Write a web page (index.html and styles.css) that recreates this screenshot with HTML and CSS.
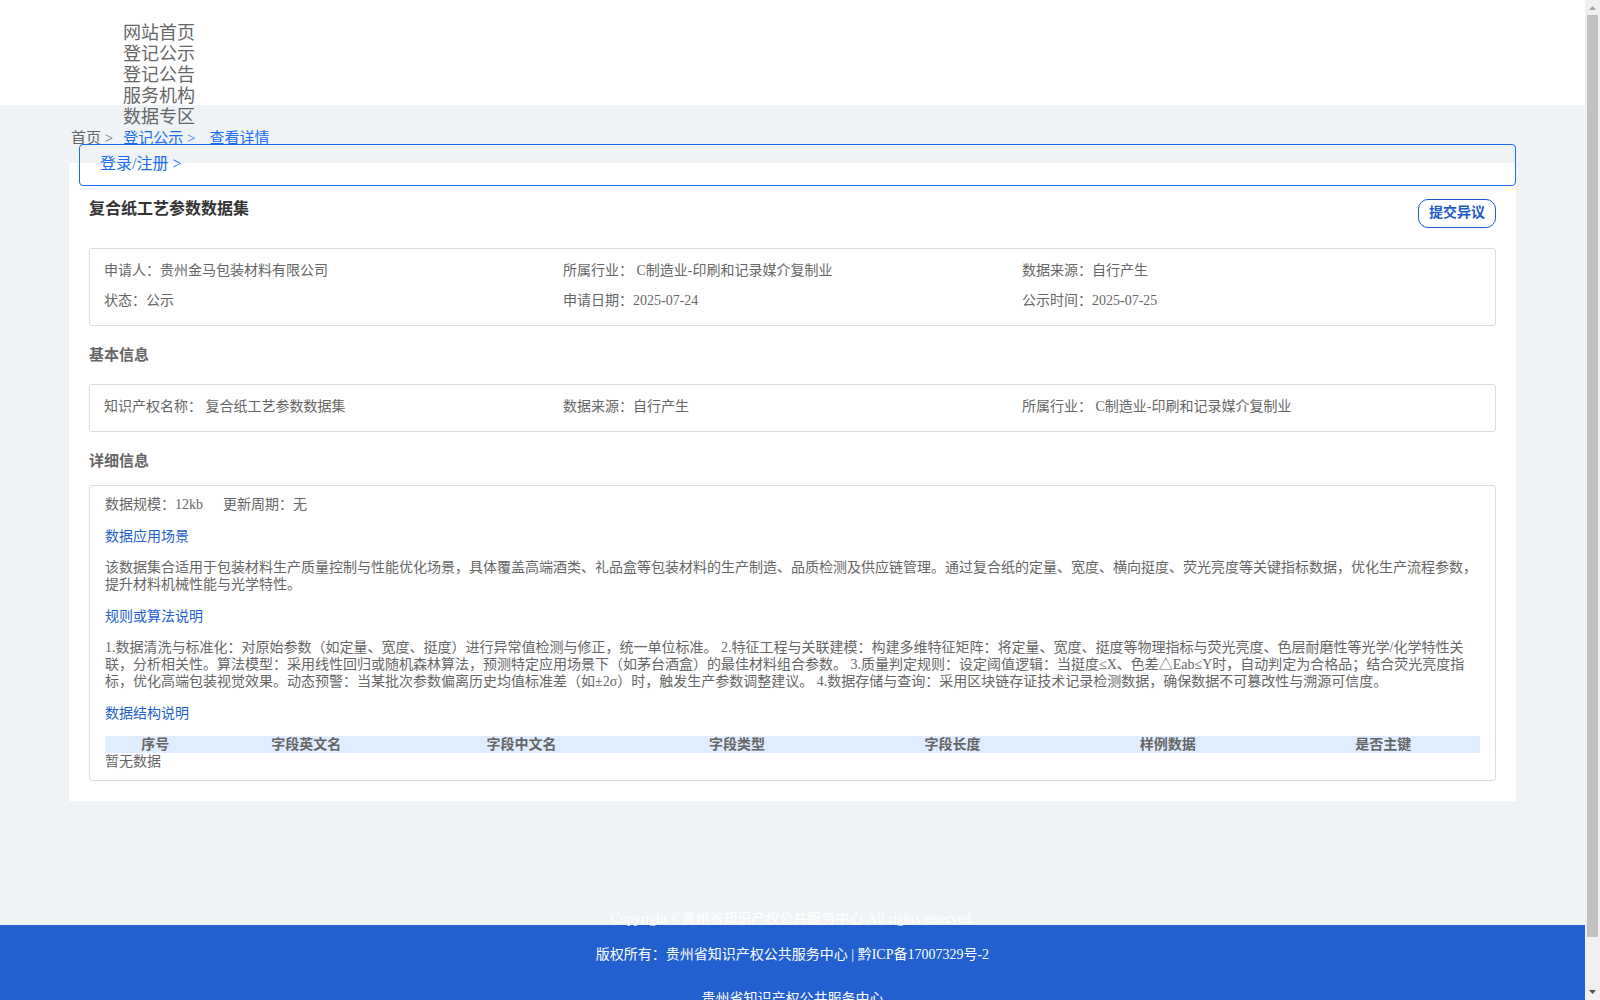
FILE: index.html
```
<!DOCTYPE html>
<html lang="zh-CN">
<head>
    <meta charset="UTF-8">
    <title>复合纸工艺参数数据集</title>
    <link rel="stylesheet" href="styles.css">
</head>
<body>
    <div class="page">
        <header class="header">
            <ul class="nav">
                <li><a href="#">网站首页</a></li>
                <li><a href="#">登记公示</a></li>
                <li><a href="#">登记公告</a></li>
                <li><a href="#">服务机构</a></li>
                <li><a href="#">数据专区</a></li>
            </ul>
        </header>

        <main class="main">
            <div class="crumbs">
                <a href="#">首页 &gt;</a>
                <a class="active" href="#">登记公示 &gt;</a>
                <a class="active last" href="#">查看详情</a>
            </div>

            <div class="card">
                <a class="login" href="#">登录/注册 &gt;</a>

                <div class="card-head">
                    <h1>复合纸工艺参数数据集</h1>
                    <button class="objection" type="button">提交异议</button>
                </div>

                <div class="box info">
                    <span>申请人：贵州金马包装材料有限公司</span>
                    <span>所属行业： C制造业-印刷和记录媒介复制业</span>
                    <span>数据来源：自行产生</span>
                    <span>状态：公示</span>
                    <span>申请日期：2025-07-24</span>
                    <span>公示时间：2025-07-25</span>
                </div>

                <h2 class="basic-title">基本信息</h2>
                <div class="box info">
                    <span>知识产权名称： 复合纸工艺参数数据集</span>
                    <span>数据来源：自行产生</span>
                    <span>所属行业： C制造业-印刷和记录媒介复制业</span>
                </div>

                <h2 class="detail-title">详细信息</h2>
                <div class="box detail">
                    <div class="scale">
                        <span>数据规模：12kb</span>
                        <span>更新周期：无</span>
                    </div>
                    <h3>数据应用场景</h3>
                    <p>该数据集合适用于包装材料生产质量控制与性能优化场景，具体覆盖高端酒类、礼品盒等包装材料的生产制造、品质检测及供应链管理。通过复合纸的定量、宽度、横向挺度、荧光亮度等关键指标数据，优化生产流程参数，提升材料机械性能与光学特性。</p>
                    <h3>规则或算法说明</h3>
                    <p>1.数据清洗与标准化：对原始参数（如定量、宽度、挺度）进行异常值检测与修正，统一单位标准。 2.特征工程与关联建模：构建多维特征矩阵：将定量、宽度、挺度等物理指标与荧光亮度、色层耐磨性等光学/化学特性关联，分析相关性。算法模型：采用线性回归或随机森林算法，预测特定应用场景下（如茅台酒盒）的最佳材料组合参数。 3.质量判定规则：设定阈值逻辑：当挺度≤X、色差△Eab≤Y时，自动判定为合格品；结合荧光亮度指标，优化高端包装视觉效果。动态预警：当某批次参数偏离历史均值标准差（如±2σ）时，触发生产参数调整建议。 4.数据存储与查询：采用区块链存证技术记录检测数据，确保数据不可篡改性与溯源可信度。</p>
                    <h3>数据结构说明</h3>
                    <table class="fields">
                        <thead>
                            <tr>
                                <th class="num">序号</th>
                                <th>字段英文名</th>
                                <th>字段中文名</th>
                                <th>字段类型</th>
                                <th>字段长度</th>
                                <th>样例数据</th>
                                <th>是否主键</th>
                            </tr>
                        </thead>
                        <tbody>
                            <tr>
                                <td colspan="7">暂无数据</td>
                            </tr>
                        </tbody>
                    </table>
                </div>
            </div>
        </main>

        <footer class="footer">
            <p class="copyright">Copyright ©贵州省知识产权公共服务中心 All rights reserved.</p>
            <p class="owner">版权所有：贵州省知识产权公共服务中心 | <a href="#">黔ICP备17007329号-2</a></p>
            <p>贵州省知识产权公共服务中心</p>
        </footer>
    </div>

    <div class="scrollbar">
        <svg width="15" height="15" viewBox="0 0 15 15"><path d="M4 10 L7.5 6 L11 10 Z" fill="#a3a3a3"/></svg>
        <div class="track"><div class="thumb"></div></div>
        <svg width="15" height="15" viewBox="0 0 15 15"><path d="M4 5 L7.5 9 L11 5 Z" fill="#505050"/></svg>
    </div>
</body>
</html>
```
FILE: styles.css
```
* {
    box-sizing: border-box;
    margin: 0;
    padding: 0;
}

body {
    display: flex;
    height: 100vh;
    overflow: hidden;
    background: #eff3f6;
    color: #666;
    font-family: "Liberation Serif", "Noto Sans CJK SC", serif;
    font-size: 14px;
    line-height: 17px;
}

a {
    color: inherit;
    text-decoration: none;
}

ul {
    list-style: none;
}

.page {
    flex: 1;
    min-width: 0;
    height: 100vh;
    overflow: hidden;
}

/* the menu is taller than the header and runs out over the page */
.header {
    height: 105px;
    padding: 23px 123px 0;
    background: #fff;
}

.nav {
    font-size: 18px;
    line-height: 21px;
}

.main {
    padding: 0 69px;
}

.crumbs {
    display: flex;
    gap: 10px;
    height: 39px;
    padding: 24px 2px 0;
    overflow: hidden;
    font-size: 15px;
    line-height: 18px;
}

.active,
.login {
    color: #1a6df0;
}

.last {
    margin-left: 4px;
}

.card {
    position: relative;
    margin-top: 19px;
    padding: 36px 20px 20px;
    background: #fff;
}

.login {
    position: absolute;
    top: -19px;
    left: 10px;
    right: 0;
    height: 42px;
    padding-left: 20px;
    border: 1px solid #1a6df0;
    border-radius: 4px;
    font-size: 16px;
    line-height: 38px;
}

.card-head {
    display: flex;
    justify-content: space-between;
    height: 49px;
}

h1 {
    color: #333;
    font-size: 16px;
    line-height: 20px;
}

.objection {
    height: 29px;
    padding: 0 10px 5px;
    background: #fff;
    border: 1px solid #1c5ac8;
    border-radius: 10px;
    color: #1c5ac8;
    font-family: inherit;
    font-size: 14px;
    font-weight: bold;
    cursor: pointer;
}

.box {
    border: 1px solid #dcdcdc;
    border-radius: 3px;
}

.info {
    display: grid;
    grid-template-columns: repeat(3, 1fr);
    padding: 7px 14px 9px;
    line-height: 30px;
}

h2 {
    font-size: 15px;
    line-height: 18px;
}

.basic-title {
    padding: 20px 0;
}

.detail-title {
    padding: 20px 0 15px;
}

.detail {
    padding: 10px 15px;
}

.scale {
    display: flex;
    gap: 20px;
}

h3 {
    margin: 15px 0 14px;
    color: #1f60d0;
    font-size: 14px;
    font-weight: normal;
}

.fields {
    width: 100%;
    table-layout: fixed;
    border-collapse: collapse;
}

.fields th {
    height: 17px;
    padding-left: 22px;
    background: #e0edff;
}

.fields .num {
    width: 6%;
    padding-left: 18px;
}

.footer {
    display: flex;
    flex-direction: column;
    height: 240px;
    margin-top: 124px;
    background: #2260d0;
    color: #fff;
    text-align: center;
}

/* sits on the upper edge of the footer */
.copyright {
    margin-top: -15px;
}

.owner {
    margin: 19px 0 27px;
}

.scrollbar {
    display: flex;
    flex-direction: column;
    width: 15px;
    background: #f0f0f0;
}

.track {
    flex: 1;
    padding: 0 2px;
}

.thumb {
    height: 95%;
    background: #c1c1c1;
}
```
